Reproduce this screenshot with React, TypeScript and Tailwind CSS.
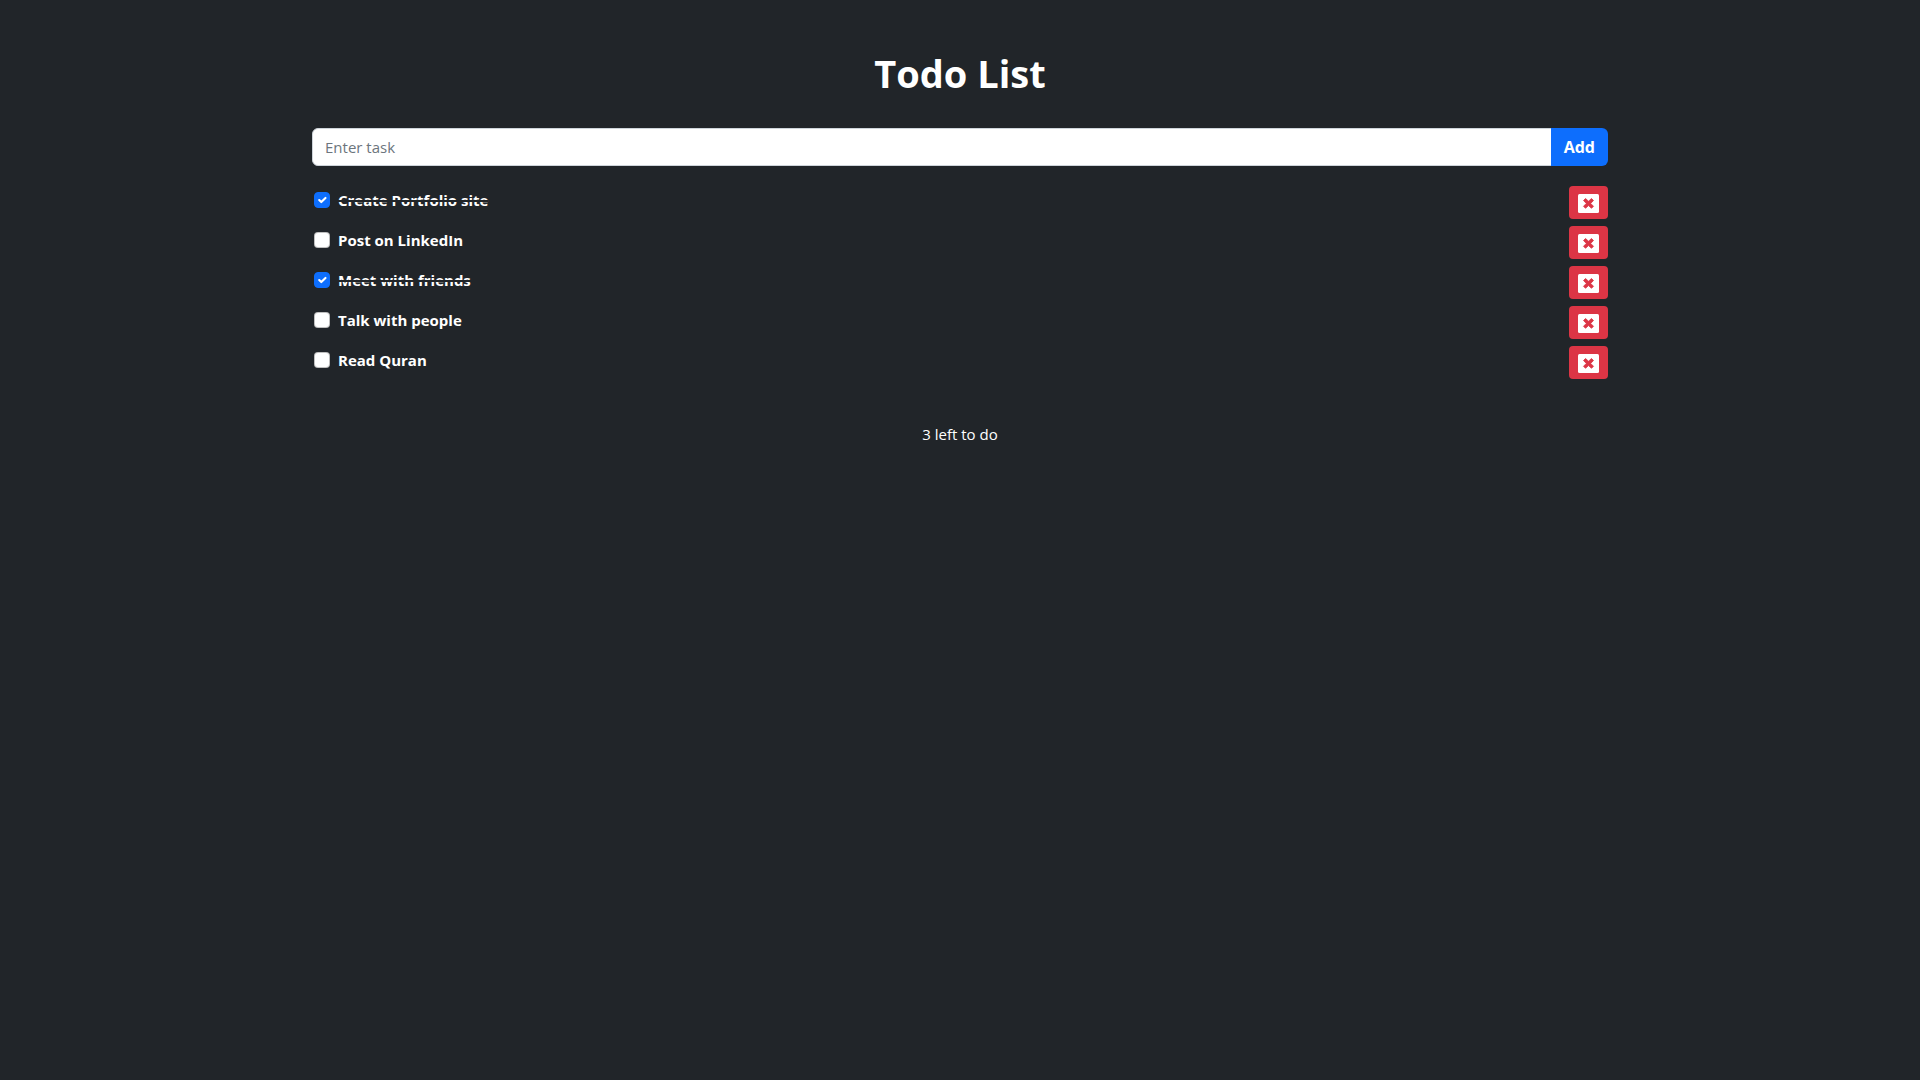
import { useState } from "react";

type Task = { id: number; title: string; done: boolean };

const initialTasks: Task[] = [
  { id: 1, title: "Create Portfolio site", done: true },
  { id: 2, title: "Post on LinkedIn", done: false },
  { id: 3, title: "Meet with friends", done: true },
  { id: 4, title: "Talk with people", done: false },
  { id: 5, title: "Read Quran", done: false },
];

function DeleteIcon() {
  return (
    <svg viewBox="0 0 21 19" className="h-[19px] w-[21px]" aria-hidden="true">
      <rect width="21" height="19" rx="1.5" fill="#fff" />
      <path
        d="M5.5 6.5 L7.5 4.5 L10.5 7.2 L13.5 4.5 L15.5 6.5 L12.7 9.4 L15.5 12.3 L13.5 14.3 L10.5 11.6 L7.5 14.3 L5.5 12.3 L8.3 9.4 Z"
        fill="#dc3545"
        stroke="#dc3545"
        strokeWidth="0.8"
        strokeLinejoin="round"
      />
    </svg>
  );
}

function TaskRow({ task, onToggle, onDelete }: { task: Task; onToggle: () => void; onDelete: () => void }) {
  const id = `task-${task.id}`;
  return (
    <li className="flex items-start justify-between">
      <div className="flex items-center gap-2 pl-0.5 pt-0.5">
        <span className="relative flex">
          <input
            id={id}
            type="checkbox"
            checked={task.done}
            onChange={onToggle}
            className="peer size-4 appearance-none rounded-[4px] border border-black/25 bg-white checked:border-[#0d6efd] checked:bg-[#0d6efd]"
          />
          <svg
            viewBox="0 0 20 20"
            className="pointer-events-none absolute inset-0 hidden size-4 p-px peer-checked:block"
            fill="none"
            stroke="#fff"
            strokeWidth="3"
            strokeLinecap="round"
            strokeLinejoin="round"
            aria-hidden="true"
          >
            <path d="M6 10l3 3l6-6" />
          </svg>
        </span>
        <label
          htmlFor={id}
          className={
            task.done
              ? "text-[15px] leading-6 font-bold line-through decoration-[#212529] decoration-2"
              : "text-[15px] leading-6 font-bold"
          }
        >
          {task.title}
        </label>
      </div>
      <button
        type="button"
        aria-label={`Delete ${task.title}`}
        onClick={onDelete}
        className="flex h-[33px] w-[39px] items-end justify-center rounded-[4px] bg-[#dc3545] pb-1.5"
      >
        <DeleteIcon />
      </button>
    </li>
  );
}

export default function App() {
  const [tasks, setTasks] = useState(initialTasks);
  const [draft, setDraft] = useState("");

  const add = (event: React.FormEvent) => {
    event.preventDefault();
    if (!draft.trim()) return;
    setTasks([...tasks, { id: Date.now(), title: draft.trim(), done: false }]);
    setDraft("");
  };

  return (
    <div className="min-h-screen bg-[#212529] px-3 pt-12 font-['Open_Sans',sans-serif] text-white">
      <main className="mx-auto max-w-[1296px]">
        <h1 className="text-center text-[38px] leading-[50px] font-bold">Todo List</h1>
        <form onSubmit={add} className="mt-[30px] flex h-[38px]">
          <input
            type="text"
            aria-label="Enter task"
            placeholder="Enter task"
            value={draft}
            onChange={(event) => setDraft(event.target.value)}
            className="min-w-0 flex-1 rounded-l-md border border-[#ced4da] bg-white px-3 text-[15px] text-[#212529] placeholder:text-[#6c757d]"
          />
          <button type="submit" className="-ml-px rounded-r-md bg-[#0d6efd] px-[13px] text-base font-bold">
            Add
          </button>
        </form>
        <ul className="mt-5 flex flex-col gap-[7px]">
          {tasks.map((task) => (
            <TaskRow
              key={task.id}
              task={task}
              onToggle={() => setTasks(tasks.map((t) => (t.id === task.id ? { ...t, done: !t.done } : t)))}
              onDelete={() => setTasks(tasks.filter((t) => t.id !== task.id))}
            />
          ))}
        </ul>
        <p className="mt-[43px] text-center text-[15px] leading-6">
          {tasks.filter((t) => !t.done).length} left to do
        </p>
      </main>
    </div>
  );
}
